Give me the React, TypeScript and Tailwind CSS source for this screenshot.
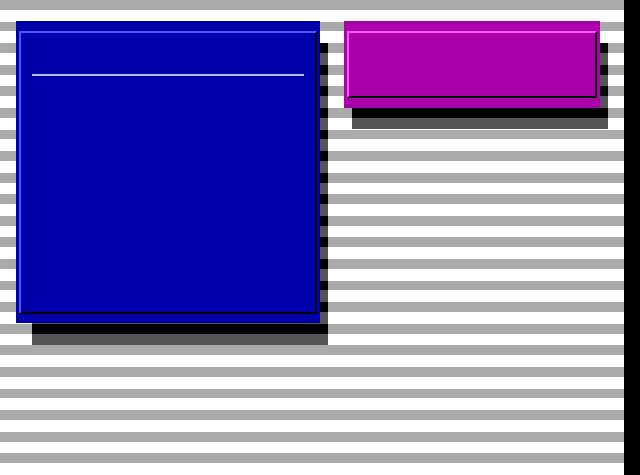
export default function App() {
  return (
    <div className="relative w-[640px] h-[475px] overflow-hidden bg-[repeating-linear-gradient(to_bottom,#aaaaaa_0px,#aaaaaa_9.8px,#ffffff_9.8px,#ffffff_21.59px)]">
      {/* shadows */}
      <div className="absolute left-[32px] top-[43px] w-[296px] h-[302px] bg-fixed bg-[repeating-linear-gradient(to_bottom,#000000_0px,#000000_9.8px,#555555_9.8px,#555555_21.59px)]" />
      <div className="absolute left-[352px] top-[43px] w-[256px] h-[86px] bg-fixed bg-[repeating-linear-gradient(to_bottom,#000000_0px,#000000_9.8px,#555555_9.8px,#555555_21.59px)]" />

      {/* blue window */}
      <div className="absolute left-[16px] top-[21px] w-[304px] h-[302px] flex flex-col bg-[#0000aa] pt-[10px] pb-[9px] px-[3px]">
        <div className="flex-1 flex flex-col border-2 border-t-[#5555ff] border-l-[#5555ff] border-r-black border-b-black">
          <div className="mt-[41px] mx-[11px] h-[2px] bg-[#bcbcf0]" />
        </div>
      </div>

      {/* magenta window */}
      <div className="absolute left-[344px] top-[21px] w-[256px] h-[87px] flex flex-col bg-[#aa00aa] pt-[10px] pb-[10px] px-[3px]">
        <div className="flex-1 border-2 border-t-[#ff55ff] border-l-[#ff55ff] border-r-black border-b-black" />
      </div>

      {/* right edge bar */}
      <div className="absolute right-0 top-0 w-[16px] h-full bg-black" />
    </div>
  )
}
